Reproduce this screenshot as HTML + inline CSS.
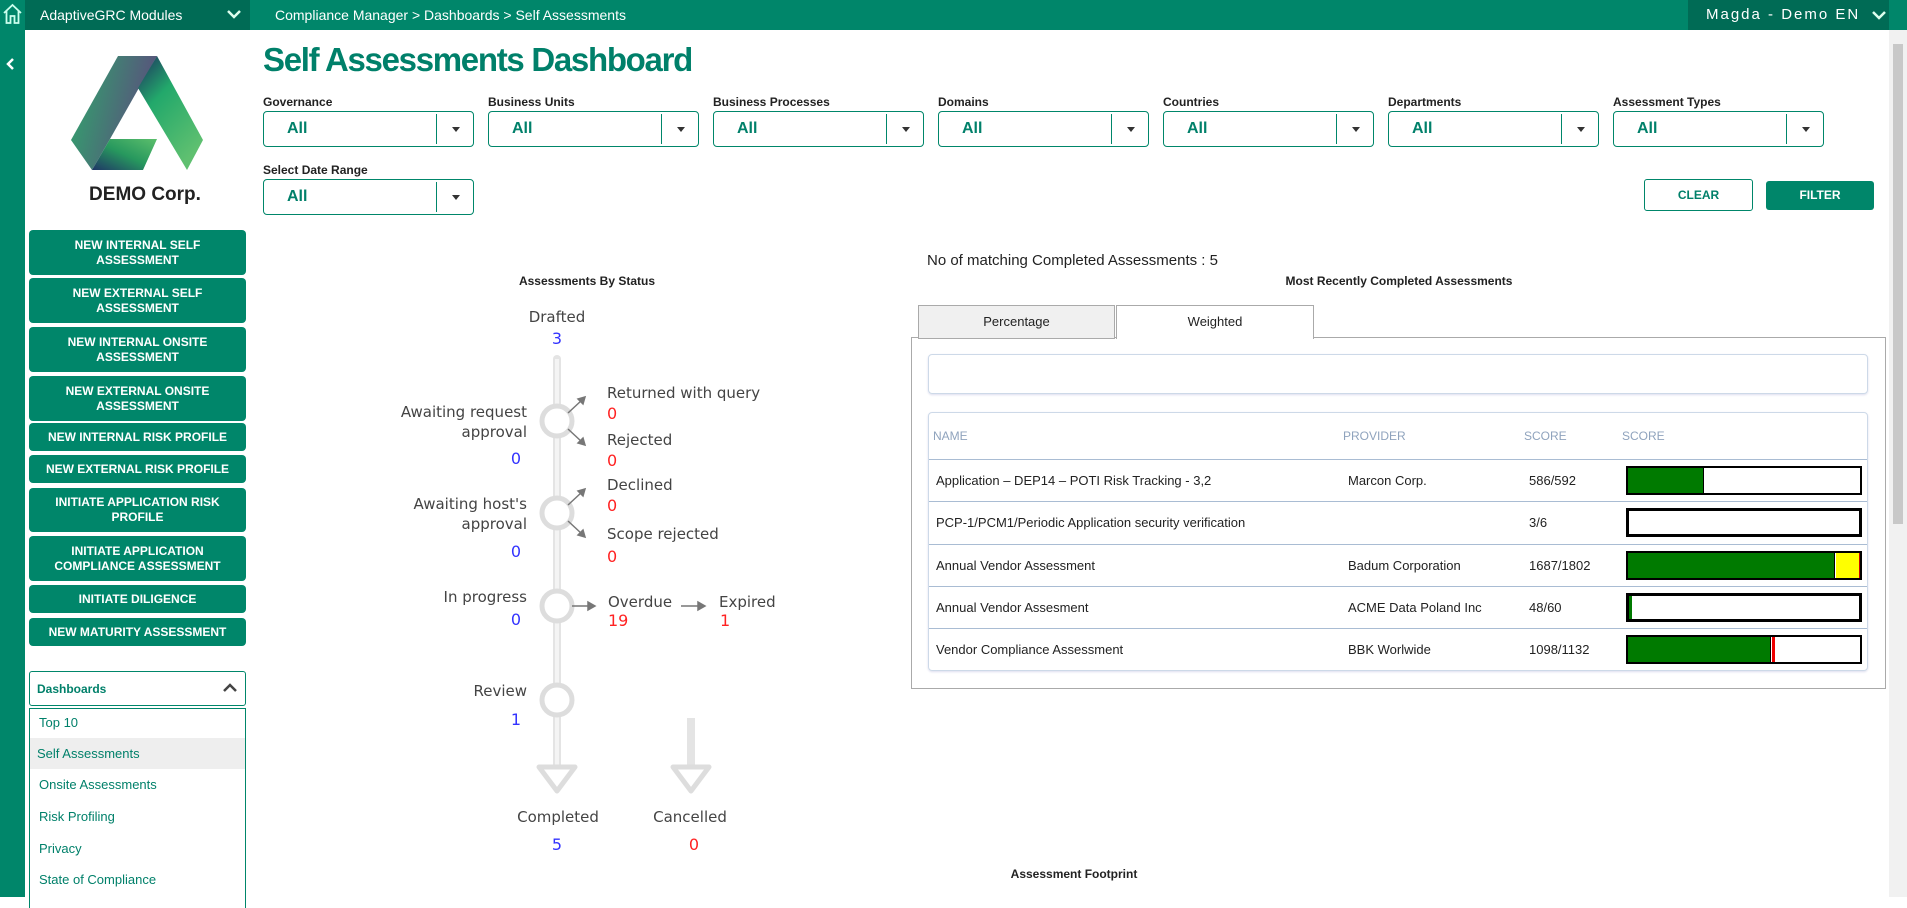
<!DOCTYPE html>
<html><head><meta charset="utf-8">
<style>
*{margin:0;padding:0;box-sizing:border-box}
body{width:1907px;height:897px;overflow:hidden;background:#fff;font-family:"Liberation Sans",Arial,sans-serif;position:relative;color:#222}
.abs{position:absolute}
.g{background:#00866a}
.btn{position:absolute;left:29px;width:217px;background:#00866a;color:#fff;font-weight:bold;font-size:12px;text-align:center;border-radius:4px;display:flex;align-items:center;justify-content:center;line-height:15px;padding:0 8px}
.lbl{position:absolute;font-size:12px;font-weight:bold;color:#222}
.sel{position:absolute;width:211px;height:36px;border:1px solid #00866a;border-radius:4px}
.sel span{position:absolute;left:23px;top:8px;font-size:16px;font-weight:bold;color:#00806a}
.sel i{position:absolute;right:36px;top:2px;bottom:2px;border-left:1px solid #00866a}
.sel b{position:absolute;right:13px;top:15px;border-left:4px solid transparent;border-right:4px solid transparent;border-top:5px solid #333}
.li{position:absolute;left:39px;font-size:13px;color:#00806a}
.row{position:absolute;left:929px;width:938px;height:42px;border-top:1.5px solid #a9bcd3;font-size:13px}
.row span{position:absolute;top:13px}
.bar{position:absolute;left:697px;top:6px;width:236px;height:29px;border:2px solid #000;background:#fff;overflow:hidden}
.bar div{position:absolute;top:0;bottom:0}
</style></head><body>
<div class="abs g" style="left:0;top:0;width:1907px;height:30px"></div>
<div class="abs" style="left:25px;top:0;width:225px;height:30px;background:#006b55"></div>
<svg class="abs" style="left:2px;top:3px" width="21" height="22" viewBox="0 0 21 22"><path d="M2 10 L10.5 2 L19 10 M4.5 8 V20 H8.5 V13 H12.5 V20 H16.5 V8" fill="none" stroke="#cfe" stroke-width="1.8"/></svg>
<div class="abs" style="left:40px;top:7px;font-size:14px;color:#fff">AdaptiveGRC Modules</div>
<svg class="abs" style="left:227px;top:9px" width="14" height="10"><path d="M1 2 L7 8 L13 2" fill="none" stroke="#dfe" stroke-width="2.5"/></svg>
<div class="abs" style="left:275px;top:7px;font-size:14px;color:#fff">Compliance Manager &gt; Dashboards &gt; Self Assessments</div>
<div class="abs" style="left:1688px;top:0;width:201px;height:30px;background:#006b55"></div>
<div class="abs" style="left:1706px;top:6px;font-size:15px;color:#fff;letter-spacing:2px">Magda - Demo EN</div>
<svg class="abs" style="left:1872px;top:10px" width="14" height="10"><path d="M1 2 L7 8 L13 2" fill="none" stroke="#dfe" stroke-width="2.5"/></svg>
<div class="abs" style="left:1889px;top:30px;width:18px;height:867px;background:#f1f1f1"></div>
<div class="abs" style="left:1893px;top:44px;width:10px;height:480px;background:#c8c8c8"></div>
<div class="abs g" style="left:0;top:30px;width:25px;height:867px"></div>
<svg class="abs" style="left:6px;top:58px" width="10" height="12"><path d="M7 1 L2 6 L7 11" fill="none" stroke="#fff" stroke-width="2.5"/></svg>
<svg class="abs" style="left:0;top:0" width="260" height="200">
<defs>
<linearGradient id="l1" x1="0" y1="0" x2="1" y2="0.3"><stop offset="0" stop-color="#2fa86c"/><stop offset="1" stop-color="#5a4f7d"/></linearGradient>
<linearGradient id="l2" x1="0" y1="0" x2="0.6" y2="1"><stop offset="0" stop-color="#1f2f5f"/><stop offset="0.4" stop-color="#22a86b"/><stop offset="1" stop-color="#5fc070"/></linearGradient>
<linearGradient id="l3" x1="0" y1="1" x2="1" y2="0"><stop offset="0" stop-color="#1f3566"/><stop offset="0.5" stop-color="#27985e"/><stop offset="1" stop-color="#5cbf6c"/></linearGradient>
</defs>
<polygon points="118,56 157,56 110,139 92,170 71,140" fill="url(#l1)"/>
<polygon points="157,56 203,140 187,170 138,88" fill="url(#l2)"/>
<polygon points="110,139 157,139 143,170 92,170" fill="url(#l3)"/>
</svg>
<div class="abs" style="left:60px;width:170px;text-align:center;top:184px;font-size:19px;font-weight:bold;color:#222">DEMO Corp.</div>
<div class="btn" style="top:230px;height:45px">NEW INTERNAL SELF ASSESSMENT</div>
<div class="btn" style="top:278px;height:45px">NEW EXTERNAL SELF ASSESSMENT</div>
<div class="btn" style="top:327px;height:45px">NEW INTERNAL ONSITE ASSESSMENT</div>
<div class="btn" style="top:376px;height:45px">NEW EXTERNAL ONSITE ASSESSMENT</div>
<div class="btn" style="top:423px;height:28px">NEW INTERNAL RISK PROFILE</div>
<div class="btn" style="top:455px;height:28px">NEW EXTERNAL RISK PROFILE</div>
<div class="btn" style="top:488px;height:44px">INITIATE APPLICATION RISK PROFILE</div>
<div class="btn" style="top:536px;height:45px">INITIATE APPLICATION COMPLIANCE ASSESSMENT</div>
<div class="btn" style="top:585px;height:28px">INITIATE DILIGENCE</div>
<div class="btn" style="top:618px;height:28px">NEW MATURITY ASSESSMENT</div>
<div class="abs" style="left:29px;top:671px;width:217px;height:35px;border:1px solid #00866a;border-radius:3px"></div>
<div class="abs" style="left:37px;top:682px;font-size:12px;font-weight:bold;color:#00806a">Dashboards</div>
<svg class="abs" style="left:223px;top:683px" width="14" height="10"><path d="M1 8 L7 2 L13 8" fill="none" stroke="#444" stroke-width="2.5"/></svg>
<div class="abs" style="left:29px;top:708px;width:217px;height:200px;border:1px solid #00866a;border-bottom:none"></div>
<div class="abs" style="left:30px;top:738px;width:215px;height:31px;background:#eee"></div>
<div class="li" style="top:715px">Top 10</div>
<div class="li" style="top:746px;left:37px">Self Assessments</div>
<div class="li" style="top:777px">Onsite Assessments</div>
<div class="li" style="top:809px">Risk Profiling</div>
<div class="li" style="top:841px">Privacy</div>
<div class="li" style="top:872px">State of Compliance</div>
<div class="abs" style="left:263px;top:43px;font-size:33px;line-height:33px;font-weight:bold;color:#00806a;letter-spacing:-1.3px">Self Assessments Dashboard</div>
<div class="lbl" style="left:263px;top:95px">Governance</div>
<div class="lbl" style="left:488px;top:95px">Business Units</div>
<div class="lbl" style="left:713px;top:95px">Business Processes</div>
<div class="lbl" style="left:938px;top:95px">Domains</div>
<div class="lbl" style="left:1163px;top:95px">Countries</div>
<div class="lbl" style="left:1388px;top:95px">Departments</div>
<div class="lbl" style="left:1613px;top:95px">Assessment Types</div>
<div class="sel" style="left:263px;top:111px"><span>All</span><i></i><b></b></div>
<div class="sel" style="left:488px;top:111px"><span>All</span><i></i><b></b></div>
<div class="sel" style="left:713px;top:111px"><span>All</span><i></i><b></b></div>
<div class="sel" style="left:938px;top:111px"><span>All</span><i></i><b></b></div>
<div class="sel" style="left:1163px;top:111px"><span>All</span><i></i><b></b></div>
<div class="sel" style="left:1388px;top:111px"><span>All</span><i></i><b></b></div>
<div class="sel" style="left:1613px;top:111px"><span>All</span><i></i><b></b></div>
<div class="lbl" style="left:263px;top:163px">Select Date Range</div>
<div class="sel" style="left:263px;top:179px"><span>All</span><i></i><b></b></div>
<div class="abs" style="left:1644px;top:179px;width:109px;height:32px;border:1px solid #00866a;border-radius:3px;text-align:center;line-height:30px;font-size:12px;font-weight:bold;color:#00806a">CLEAR</div>
<div class="abs" style="left:1766px;top:181px;width:108px;height:29px;background:#00866a;border-radius:3px;text-align:center;line-height:29px;font-size:12px;font-weight:bold;color:#fff">FILTER</div>
<div class="abs" style="left:487px;width:200px;text-align:center;top:274px;font-size:12px;font-weight:bold">Assessments By Status</div>
<svg class="abs" style="left:380px;top:290px;font-family:'DejaVu Sans',sans-serif" width="460" height="570" viewBox="380 290 460 570">
<g fill="none" stroke="#e4e4e4">
<line x1="557" y1="359" x2="557" y2="770" stroke-width="8" stroke-linecap="round"/>
<line x1="691" y1="718" x2="691" y2="770" stroke-width="8"/>
<line x1="557" y1="359" x2="557" y2="770" stroke="#f4f4f4" stroke-width="4"/>
</g>
<g fill="#fff" stroke="#ddd" stroke-width="5">
<circle cx="557" cy="421" r="15"/><circle cx="557" cy="513" r="15"/><circle cx="557" cy="606" r="15"/><circle cx="557" cy="700" r="15"/>
<polygon points="539,767 575,767 557,791" stroke-linejoin="round"/>
<polygon points="673,767 709,767 691,791" stroke-linejoin="round"/>
</g>
<g stroke="#777" stroke-width="1.5" fill="#777">
<line x1="568" y1="413" x2="582" y2="400"/><polygon points="585,397 578,399 583,404"/>
<line x1="568" y1="429" x2="582" y2="442"/><polygon points="585,445 578,443 583,438"/>
<line x1="568" y1="505" x2="582" y2="492"/><polygon points="585,489 578,491 583,496"/>
<line x1="568" y1="521" x2="582" y2="534"/><polygon points="585,537 578,535 583,530"/>
<line x1="572" y1="606" x2="590" y2="606"/><polygon points="595,606 588,602 588,610"/>
<line x1="681" y1="606" x2="700" y2="606"/><polygon points="705,606 698,602 698,610"/>
</g>
<g font-size="15" fill="#444">
<text x="557" y="322" text-anchor="middle">Drafted</text>
<text x="527" y="417" text-anchor="end">Awaiting request</text>
<text x="527" y="437" text-anchor="end">approval</text>
<text x="527" y="509" text-anchor="end">Awaiting host's</text>
<text x="527" y="529" text-anchor="end">approval</text>
<text x="527" y="602" text-anchor="end">In progress</text>
<text x="527" y="696" text-anchor="end">Review</text>
<text x="607" y="398">Returned with query</text>
<text x="607" y="445">Rejected</text>
<text x="607" y="490">Declined</text>
<text x="607" y="539">Scope rejected</text>
<text x="608" y="607">Overdue</text>
<text x="719" y="607">Expired</text>
<text x="558" y="822" text-anchor="middle">Completed</text>
<text x="690" y="822" text-anchor="middle">Cancelled</text>
</g>
<g font-size="16" fill="#3333ff">
<text x="557" y="344" text-anchor="middle">3</text>
<text x="516" y="464" text-anchor="middle">0</text>
<text x="516" y="557" text-anchor="middle">0</text>
<text x="516" y="625" text-anchor="middle">0</text>
<text x="516" y="725" text-anchor="middle">1</text>
<text x="557" y="850" text-anchor="middle">5</text>
</g>
<g font-size="16" fill="#ff2222">
<text x="607" y="419">0</text>
<text x="607" y="466">0</text>
<text x="607" y="511">0</text>
<text x="607" y="562">0</text>
<text x="608" y="626">19</text>
<text x="720" y="626">1</text>
<text x="694" y="850" text-anchor="middle">0</text>
</g>
</svg>
<div class="abs" style="left:927px;top:252px;font-size:15px;color:#222">No of matching Completed Assessments : 5</div>
<div class="abs" style="left:1249px;width:300px;text-align:center;top:274px;font-size:12px;font-weight:bold">Most Recently Completed Assessments</div>
<div class="abs" style="left:911px;top:337px;width:975px;height:352px;border:1px solid #aaa"></div>
<div class="abs" style="left:918px;top:305px;width:197px;height:34px;border:1px solid #aaa;background:#f0f0f0;text-align:center;line-height:32px;font-size:13px">Percentage</div>
<div class="abs" style="left:1116px;top:305px;width:198px;height:34px;border:1px solid #aaa;border-bottom:none;background:#fff;text-align:center;line-height:32px;font-size:13px">Weighted</div>
<div class="abs" style="left:928px;top:354px;width:940px;height:40px;border:1.5px solid #cdd9e8;border-radius:4px;box-shadow:0 1px 2px #dde"></div>
<div class="abs" style="left:928px;top:412px;width:940px;height:259px;border:1.5px solid #cdd9e8;border-radius:4px;box-shadow:0 1px 2px #dde"></div>
<div class="abs" style="top:429px;left:933px;font-size:12px;color:#8fa3bd">NAME</div>
<div class="abs" style="top:429px;left:1343px;font-size:12px;color:#8fa3bd">PROVIDER</div>
<div class="abs" style="top:429px;left:1524px;font-size:12px;color:#8fa3bd">SCORE</div>
<div class="abs" style="top:429px;left:1622px;font-size:12px;color:#8fa3bd">SCORE</div>
<div class="row" style="top:459px"><span style="left:7px">Application – DEP14 – POTI Risk Tracking - 3,2</span><span style="left:419px">Marcon Corp.</span><span style="left:600px">586/592</span><div class="bar"><div style="left:0;width:76px;background:#007a00;border-right:1px solid #000"></div></div></div>
<div class="row" style="top:501px"><span style="left:7px">PCP-1/PCM1/Periodic Application security verification</span><span style="left:600px">3/6</span><div class="bar" style="border-width:3px"></div></div>
<div class="row" style="top:544px"><span style="left:7px">Annual Vendor Assessment</span><span style="left:419px">Badum Corporation</span><span style="left:600px">1687/1802</span><div class="bar"><div style="left:0;width:207px;background:#007a00;border-right:1px solid #000"></div><div style="left:208px;width:24px;background:#ffff00;border-right:1px solid #c00"></div></div></div>
<div class="row" style="top:586px"><span style="left:7px">Annual Vendor Assesment</span><span style="left:419px">ACME Data Poland Inc</span><span style="left:600px">48/60</span><div class="bar" style="border-width:3px"><div style="left:0;width:3px;background:#007a00"></div></div></div>
<div class="row" style="top:628px"><span style="left:7px">Vendor Compliance Assessment</span><span style="left:419px">BBK Worlwide</span><span style="left:600px">1098/1132</span><div class="bar"><div style="left:0;width:143px;background:#007a00;border-right:1px solid #000"></div><div style="left:144px;width:3px;background:#e00"></div></div></div>
<div class="abs" style="left:974px;width:200px;text-align:center;top:867px;font-size:12px;font-weight:bold">Assessment Footprint</div>
</body></html>
